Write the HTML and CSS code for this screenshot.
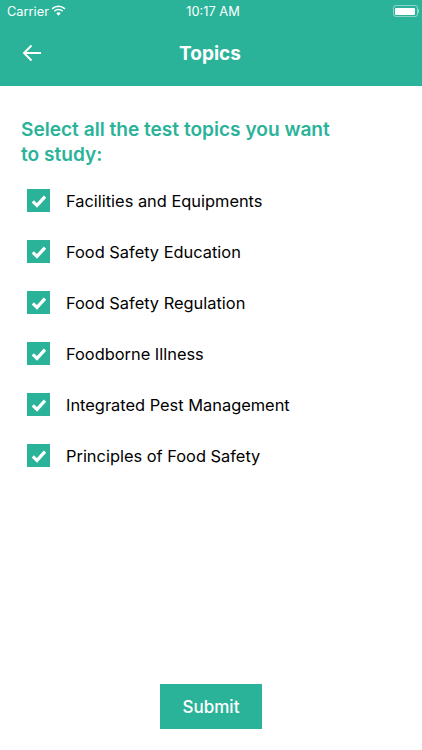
FILE: index.html
```html
<!DOCTYPE html>
<html lang="en">
<head>
    <meta charset="UTF-8">
    <meta name="viewport" content="width=device-width, initial-scale=1.0">
    <title>Topics</title>
    <link rel="stylesheet" href="styles.css">
</head>
<body>
    <header class="app-header">
        <div class="status-bar">
            <div class="status-left">
                <span>Carrier</span>
                <svg class="wifi-icon" viewBox="0 0 16 12" width="15" height="11">
                    <path d="M1 4.2 A10 10 0 0 1 15 4.2" fill="none" stroke="#fff" stroke-width="1.7"/>
                    <path d="M3.5 6.8 A6.4 6.4 0 0 1 12.5 6.8" fill="none" stroke="#fff" stroke-width="1.7"/>
                    <path d="M5.6 9 L8 11.6 L10.4 9 A3.4 3.4 0 0 0 5.6 9 Z" fill="#fff"/>
                </svg>
            </div>
            <div class="status-time">10:17 AM</div>
            <div class="battery">
                <div class="battery-body"><div class="battery-level"></div></div>
                <div class="battery-tip"></div>
            </div>
        </div>
        <div class="nav-bar">
            <svg class="back-icon" viewBox="0 0 20 18" width="20" height="18">
                <path d="M19 9 H2 M9.5 1.5 L2 9 L9.5 16.5" fill="none" stroke="#fff" stroke-width="1.9"/>
            </svg>
            <h1>Topics</h1>
        </div>
    </header>

    <main class="main-content">
        <h2>Select all the test topics you want to study:</h2>

        <ul class="topic-list">
            <li class="topic">
                <span class="check"><svg viewBox="0 0 16 14" width="16" height="14"><path d="M1.8 7.4 L6 11.4 L14 2.6" fill="none" stroke="#fff" stroke-width="3.2"/></svg></span>
                Facilities and Equipments
            </li>
            <li class="topic">
                <span class="check"><svg viewBox="0 0 16 14" width="16" height="14"><path d="M1.8 7.4 L6 11.4 L14 2.6" fill="none" stroke="#fff" stroke-width="3.2"/></svg></span>
                Food Safety Education
            </li>
            <li class="topic">
                <span class="check"><svg viewBox="0 0 16 14" width="16" height="14"><path d="M1.8 7.4 L6 11.4 L14 2.6" fill="none" stroke="#fff" stroke-width="3.2"/></svg></span>
                Food Safety Regulation
            </li>
            <li class="topic">
                <span class="check"><svg viewBox="0 0 16 14" width="16" height="14"><path d="M1.8 7.4 L6 11.4 L14 2.6" fill="none" stroke="#fff" stroke-width="3.2"/></svg></span>
                Foodborne Illness
            </li>
            <li class="topic">
                <span class="check"><svg viewBox="0 0 16 14" width="16" height="14"><path d="M1.8 7.4 L6 11.4 L14 2.6" fill="none" stroke="#fff" stroke-width="3.2"/></svg></span>
                Integrated Pest Management
            </li>
            <li class="topic">
                <span class="check"><svg viewBox="0 0 16 14" width="16" height="14"><path d="M1.8 7.4 L6 11.4 L14 2.6" fill="none" stroke="#fff" stroke-width="3.2"/></svg></span>
                Principles of Food Safety
            </li>
        </ul>

        <div class="submit-row">
            <button class="submit-btn">Submit</button>
        </div>
    </main>
</body>
</html>
```

FILE: styles.css
```css
:root {
    --primary-color: #2bb39a;
}

* {
    box-sizing: border-box;
}

html, body {
    height: 100%;
}

body {
    font-family: Inter, "Liberation Sans", sans-serif;
    margin: 0;
    padding: 0;
    background-color: #fff;
    color: #000;
    display: flex;
    flex-direction: column;
    overflow: hidden;
}

.app-header {
    background-color: var(--primary-color);
    color: #fff;
    height: 86px;
    flex-shrink: 0;
}

.status-bar {
    display: grid;
    grid-template-columns: 1fr auto 1fr;
    align-items: center;
    height: 22px;
    padding: 0 3px 0 7px;
    font-size: 12.8px;
}

.status-left {
    display: flex;
    align-items: center;
    gap: 5px;
}

.status-left span {
    width: 39px;
}

.wifi-icon {
    margin-top: -1px;
}

.battery {
    display: flex;
    align-items: center;
    justify-content: flex-end;
}

.battery-body {
    width: 25px;
    height: 12px;
    padding: 1.5px;
    border: 1px solid rgba(255, 255, 255, 0.45);
    border-radius: 3px;
}

.battery-level {
    height: 100%;
    background-color: #fff;
    border-radius: 1px;
}

.battery-tip {
    width: 1.5px;
    height: 4px;
    background-color: rgba(255, 255, 255, 0.45);
}

.nav-bar {
    position: relative;
    display: flex;
    align-items: center;
    justify-content: center;
    height: 64px;
    padding: 0 2px 1px 0;
}

.nav-bar h1 {
    margin: 0;
    font-size: 19px;
    font-weight: 700;
}

.back-icon {
    position: absolute;
    left: 22px;
    top: 22px;
}

.main-content {
    flex: 1;
    display: flex;
    flex-direction: column;
    padding: 31px 21px 21px;
}

.main-content h2 {
    margin: 0 0 8px;
    width: 325px;
    font-size: 19.1px;
    line-height: 25px;
    font-weight: 600;
    color: var(--primary-color);
}

.topic-list {
    list-style: none;
    margin: 0;
    padding: 0 0 0 6px;
}

.topic {
    display: flex;
    align-items: center;
    gap: 16px;
    height: 51px;
    font-size: 16.4px;
}

.check {
    display: flex;
    align-items: center;
    justify-content: center;
    width: 23px;
    height: 23px;
    background-color: var(--primary-color);
}

.submit-row {
    margin-top: auto;
    display: flex;
    justify-content: center;
}

.submit-btn {
    width: 102px;
    height: 45px;
    background-color: var(--primary-color);
    color: #fff;
    border: none;
    font-family: inherit;
    font-size: 17px;
    font-weight: 500;
}
```
